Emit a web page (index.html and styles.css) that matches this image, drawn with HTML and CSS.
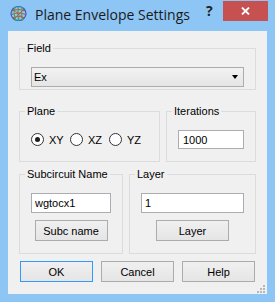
FILE: index.html
```html
<!DOCTYPE html>
<html>
<head>
<meta charset="utf-8">
<link rel="stylesheet" href="styles.css">
</head>
<body>
<div class="window">
  <div class="titlebar">
    <svg class="app-icon" width="17" height="17" viewBox="0 0 17 17">
      <ellipse cx="8.5" cy="8.5" rx="7.5" ry="7" fill="none" stroke="#2a5fd8" stroke-width="1.2"/>
      <path d="M2 6 Q8.5 3 15 6 M1.5 9.5 Q8.5 6.5 15.5 9.5 M2.5 13 Q8.5 10 14.5 13" fill="none" stroke="#e03a3a" stroke-width="1.2"/>
      <path d="M5 2 Q3 9 6 16 M8.5 1.5 Q7 9 9 16 M12 2 Q11 9 12.5 15.5" fill="none" stroke="#3cb043" stroke-width="1.2"/>
      <path d="M3 4 L14 14 M14 4 L4 14" fill="none" stroke="#d9433c" stroke-width="0.8"/>
    </svg>
    <span class="title">Plane Envelope Settings</span>
    <span class="help">?</span>
    <div class="close">
      <svg width="9" height="8" viewBox="0 0 9 8"><path d="M1 0.5 L8 7.5 M8 0.5 L1 7.5" stroke="#fff" stroke-width="1.8"/></svg>
    </div>
  </div>
  <div class="client">
    <fieldset class="group g-field">
      <legend>Field</legend>
      <div class="combo"><span>Ex</span><span class="arrow"></span></div>
    </fieldset>
    <div class="row row-1">
      <fieldset class="group g-plane">
        <legend>Plane</legend>
        <div class="radios">
          <label class="radio"><span class="circle checked"></span>XY</label>
          <label class="radio"><span class="circle"></span>XZ</label>
          <label class="radio"><span class="circle"></span>YZ</label>
        </div>
      </fieldset>
      <fieldset class="group g-iter">
        <legend>Iterations</legend>
        <input class="edit edit-iter" type="text" value="1000">
      </fieldset>
    </div>
    <div class="row row-2">
      <fieldset class="group g-sub">
        <legend>Subcircuit Name</legend>
        <input class="edit" type="text" value="wgtocx1">
        <button class="btn">Subc name</button>
      </fieldset>
      <fieldset class="group g-layer">
        <legend>Layer</legend>
        <input class="edit" type="text" value="1">
        <button class="btn">Layer</button>
      </fieldset>
    </div>
    <div class="buttons">
      <button class="btn default">OK</button>
      <button class="btn">Cancel</button>
      <button class="btn">Help</button>
    </div>
    <svg class="grip" width="8" height="8" viewBox="0 0 8 8">
      <rect x="6" y="0" width="2" height="2" fill="#b8b8b8"/>
      <rect x="3" y="3" width="2" height="2" fill="#b8b8b8"/>
      <rect x="6" y="3" width="2" height="2" fill="#b8b8b8"/>
      <rect x="0" y="6" width="2" height="2" fill="#b8b8b8"/>
      <rect x="3" y="6" width="2" height="2" fill="#b8b8b8"/>
      <rect x="6" y="6" width="2" height="2" fill="#b8b8b8"/>
    </svg>
  </div>
</div>
</body>
</html>
```
FILE: styles.css
```css
* { box-sizing: border-box; }
html, body { margin: 0; padding: 0; }
body { width: 275px; height: 302px; overflow: hidden; }

.window {
  width: 275px;
  height: 302px;
  background: #8dc5f5;
  display: flex;
  flex-direction: column;
}

.titlebar {
  height: 31px;
  display: flex;
  align-items: flex-start;
}
.app-icon { margin: 5px 0 0 10px; flex: none; }
.title {
  margin: 5px 0 0 8px;
  font-family: "Open Sans", "Noto Sans", sans-serif;
  font-size: 14px;
  line-height: 20px;
  color: #1a1a1a;
  white-space: nowrap;
}
.help {
  margin: 1px 0 0 auto;
  width: 17px;
  font-family: "Open Sans", sans-serif;
  font-weight: 700;
  font-size: 14px;
  line-height: 20px;
  color: #222;
}
.close {
  margin: 1px 7px 0 0;
  width: 45px;
  height: 20px;
  background: #c75050;
  display: flex;
  align-items: center;
  justify-content: center;
}

.client {
  position: relative;
  margin: 0 8px;
  height: 263px;
  background: #f0f0f0;
  padding: 10px 11px 0;
  font-family: "Liberation Sans", Arial, sans-serif;
  font-size: 11px;
  color: #000;
  display: flex;
  flex-direction: column;
}

.group {
  margin: 0;
  border: 1px solid #dcdcdc;
  min-width: 0;
}
.group legend {
  margin-left: -6px;
  padding: 0 2px;
  line-height: 14px;
  height: 14px;
}

.g-field { padding: 12px 11px 2px; }

.combo {
  height: 20px;
  border: 1px solid #acacac;
  background: linear-gradient(#f2f2f2, #e5e5e5);
  display: flex;
  align-items: center;
  justify-content: space-between;
  padding: 0 5px 0 2px;
}
.arrow {
  width: 0;
  height: 0;
  border-left: 3.5px solid transparent;
  border-right: 3.5px solid transparent;
  border-top: 4px solid #000;
}

.row { display: flex; gap: 6px; }
.row-1 { margin-top: 14px; }
.row-2 { margin-top: 5px; }

.g-plane { width: 141px; padding: 15px 11px 15px; }
.g-iter { width: 90px; padding: 12px 11px 12px; }

.radios { display: flex; height: 13px; }
.radio { width: 41px; display: flex; align-items: center; }
.circle {
  width: 13px;
  height: 13px;
  border: 1px solid #333;
  border-radius: 50%;
  background: #fff;
  margin-right: 5px;
  display: flex;
  align-items: center;
  justify-content: center;
  flex: none;
}
.circle.checked::after {
  content: "";
  width: 5px;
  height: 5px;
  border-radius: 50%;
  background: #1e1e1e;
}

.edit {
  display: block;
  width: 100%;
  height: 20px;
  margin: 0;
  border: 1px solid #abadb3;
  background: #fff;
  font-family: "Liberation Sans", Arial, sans-serif;
  font-size: 11px;
  color: #000;
  padding: 0 3px;
  outline: none;
}
.edit-iter { height: 19px; padding-left: 4px; }

.g-sub { width: 104px; padding: 12px 11px 12px; display: flex; flex-direction: column; align-items: center; }
.g-layer { width: 127px; padding: 12px 11px 12px; display: flex; flex-direction: column; align-items: center; }
.g-sub .btn, .g-layer .btn { margin-top: 7px; }

.btn {
  width: 73px;
  height: 21px;
  margin: 0;
  padding: 0;
  border: 1px solid #acacac;
  background: linear-gradient(#f0f0f0, #e5e5e5);
  font-family: "Liberation Sans", Arial, sans-serif;
  font-size: 11px;
  color: #000;
}
.btn.default { border-color: #3399ff; }

.buttons {
  display: flex;
  gap: 8px;
  margin: 7px 0 0 1px;
}

.grip { position: absolute; right: 2px; bottom: 1px; }
```
